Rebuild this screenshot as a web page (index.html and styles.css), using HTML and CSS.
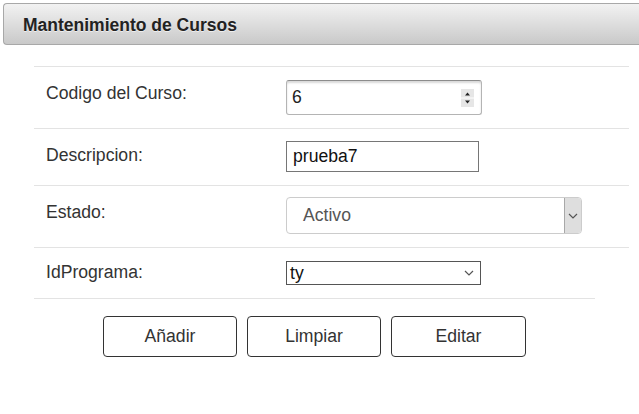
FILE: index.html
```html
<!DOCTYPE html>
<html>
<head>
<meta charset="utf-8">
<link rel="stylesheet" href="styles.css">
</head>
<body>
<div class="panel-head">Mantenimiento de Cursos</div>
<div class="form">
  <div class="row r1">
    <div class="label">Codigo del Curso:</div>
    <div class="field">
      <div class="num">
        <span>6</span>
        <span class="spin"><svg width="13" height="18" viewBox="0 0 13 18"><rect x="0" y="0" width="13" height="18" fill="#e6e6e6"/><line x1="0" y1="9" x2="13" y2="9" stroke="#fff" stroke-width="1"/><path d="M4 6.5 L6.5 3.5 L9 6.5 Z" fill="#222"/><path d="M4 11.5 L6.5 14.5 L9 11.5 Z" fill="#222"/></svg></span>
      </div>
    </div>
  </div>
  <div class="row r2">
    <div class="label">Descripcion:</div>
    <div class="field"><div class="txt">prueba7</div></div>
  </div>
  <div class="row r3">
    <div class="label">Estado:</div>
    <div class="field">
      <div class="sel1">
        <span class="sel1-text">Activo</span>
        <span class="sel1-btn"><svg width="10" height="6" viewBox="0 0 10 6"><path d="M1 1 L5 5 L9 1" fill="none" stroke="#555" stroke-width="1.2"/></svg></span>
      </div>
    </div>
  </div>
  <div class="row r4">
    <div class="label">IdPrograma:</div>
    <div class="field">
      <div class="sel2">
        <span>ty</span>
        <svg width="10" height="6" viewBox="0 0 10 6"><path d="M1 1 L5 5 L9 1" fill="none" stroke="#555" stroke-width="1.2"/></svg>
      </div>
    </div>
  </div>
  <div class="endline"></div>
  <div class="buttons">
    <button class="btn">Añadir</button>
    <button class="btn">Limpiar</button>
    <button class="btn">Editar</button>
  </div>
</div>
</body>
</html>
```
FILE: styles.css
```css
html, body { margin: 0; padding: 0; background: #fff; }
body {
  font-family: "Liberation Sans", Arial, sans-serif;
  color: #333;
  width: 639px;
  height: 414px;
  overflow: hidden;
}
.panel-head {
  margin: 3px 0 0 3px;
  height: 42px;
  box-sizing: border-box;
  border: 1px solid #a8a8a8;
  border-right: none;
  border-radius: 4px 0 0 4px;
  background: linear-gradient(#f2f2f2, #c9c9c9);
  font-weight: bold;
  font-size: 17.5px;
  color: #222;
  padding-left: 19px;
  line-height: 42px;
  text-shadow: 0 1px 0 rgba(255,255,255,0.6);
}
.form {
  margin: 21px 0 0 34px;
  width: 595px;
}
.row {
  display: flex;
  border-top: 1px solid #e3e3e3;
  box-sizing: border-box;
}
.label {
  width: 252px;
  padding-left: 12px;
  box-sizing: border-box;
  font-size: 17.6px;
  color: #333;
}
.r1 { height: 62px; }
.r1 .label { padding-top: 16px; }
.r1 .field { padding-top: 13px; }
.r2 { height: 57px; }
.r2 .label { padding-top: 16px; }
.r2 .field { padding-top: 12px; }
.r3 { height: 62px; }
.r3 .label { padding-top: 16px; }
.r3 .field { padding-top: 11px; }
.r4 { height: 51px; }
.r4 .label { padding-top: 14px; }
.r4 .field { padding-top: 13px; }
.endline {
  width: 561px;
  border-top: 1px solid #e3e3e3;
}
.num {
  width: 196px;
  height: 35px;
  box-sizing: border-box;
  border: 1px solid #b4b4b4;
  border-top-color: #8c8c8c;
  border-radius: 3px;
  box-shadow: inset 0 2px 2px rgba(0,0,0,0.15);
  display: flex;
  align-items: center;
  justify-content: space-between;
  padding: 0 7px 0 5px;
  font-size: 17.6px;
  color: #222;
}
.spin { display: flex; }
.txt {
  width: 193px;
  height: 31px;
  box-sizing: border-box;
  border: 1px solid #767676;
  font-size: 17.6px;
  color: #111;
  padding-left: 6px;
  line-height: 29px;
}
.sel1 {
  width: 296px;
  height: 37px;
  box-sizing: border-box;
  border: 1px solid #ccc;
  border-radius: 4px;
  display: flex;
  align-items: stretch;
  justify-content: space-between;
  font-size: 17.6px;
  color: #555;
  overflow: hidden;
}
.sel1-text { padding-left: 16px; line-height: 35px; }
.sel1-btn {
  width: 16px;
  background: #dedede;
  border-left: 1px solid #a8a8a8;
  display: flex;
  align-items: center;
  justify-content: center;
}
.sel2 {
  width: 195px;
  height: 24px;
  box-sizing: border-box;
  border: 1px solid #555;
  display: flex;
  align-items: center;
  justify-content: space-between;
  padding: 0 6px 0 3px;
  font-size: 17.6px;
  color: #111;
}
.buttons {
  display: flex;
  gap: 10px;
  margin: 17px 0 0 69px;
}
.btn {
  width: 134px;
  height: 41px;
  box-sizing: border-box;
  background: #fff;
  border: 1px solid #333;
  border-radius: 4px;
  font-family: "Liberation Sans", Arial, sans-serif;
  font-size: 17.6px;
  color: #333;
  padding: 0;
}
.btn:last-child { width: 135px; }
```
